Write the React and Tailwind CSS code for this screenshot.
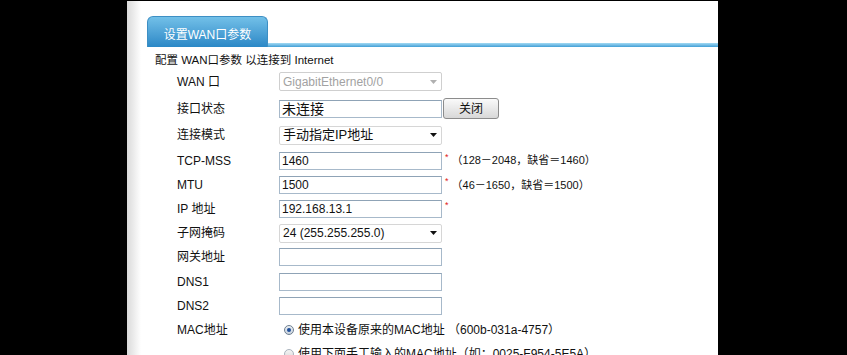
import React from "react";

function Arrow({ color }) {
  return (
    <svg width="7" height="4" viewBox="0 0 7 4" className="shrink-0">
      <polygon points="0,0 7,0 3.5,4" fill={color} />
    </svg>
  );
}

function Box({ children, className = "" }) {
  return (
    <div
      className={
        "w-[163px] h-[18px] shrink-0 border border-[#a7b9ca] border-t-[#8fa3b6] bg-white pl-[2px] flex items-center text-[12px] leading-[16px] text-[#111] whitespace-nowrap overflow-hidden " +
        className
      }
    >
      {children}
    </div>
  );
}

function Star() {
  return <span className="ml-[3px] mb-[7px] text-[9px] leading-[9px] text-[#e02020]">*</span>;
}

function Radio({ checked }) {
  return (
    <div
      className={
        "w-[10px] h-[10px] rounded-full border flex items-center justify-center shrink-0 " +
        (checked
          ? "border-[#6f7f90] bg-linear-to-b from-[#e9eef3] to-[#c9d3dd]"
          : "border-[#a9b3bd] bg-linear-to-b from-[#f4f4f4] to-[#dcdcdc]")
      }
    >
      {checked && <div className="w-[4px] h-[4px] rounded-full bg-[#1f4f9a]" />}
    </div>
  );
}

export default function App() {
  return (
    <div className="w-[847px] h-[355px] bg-black flex overflow-hidden font-['Liberation_Sans','Noto_Sans_CJK_SC',sans-serif] text-[12px] text-[#111]">
      <div className="w-[127px] shrink-0" />
      <div className="w-[591px] shrink-0 mt-[1px] bg-white flex overflow-hidden">
        <div className="w-[14px] shrink-0 bg-linear-to-r from-[#dadada] to-white" />
        <div className="flex-1 pt-[15px]">
          {/* tab bar */}
          <div className="flex items-end h-[31px]">
            <div className="ml-[6px] w-[121px] h-full rounded-t-[6px] bg-linear-to-b from-[#72c0e8] to-[#2a88c6] border border-b-0 border-[#3d8fc4] text-white text-[12px] leading-[16px] flex justify-center pt-[10px]">
              设置WAN口参数
            </div>
            <div className="flex-1 h-[4px] bg-linear-to-b from-[#a2daf3] to-[#3f9fd6]" />
          </div>

          {/* header */}
          <div className="mt-[5px] pl-[14px] text-[11.5px] leading-[16px] whitespace-nowrap">
            配置 WAN口参数 以连接到 Internet
          </div>

          <div className="pl-[36px]">
            {/* WAN */}
            <div className="h-[27px] flex items-center">
              <div className="w-[102px]">WAN 口</div>
              <div className="w-[163px] h-[19px] border border-[#cfcfcf] rounded-[2px] bg-white flex items-center justify-between pl-[3px] pr-[4px] text-[#a2a2a2]">
                <span>GigabitEthernet0/0</span>
                <Arrow color="#b0b0b0" />
              </div>
            </div>
            {/* 接口状态 */}
            <div className="h-[27px] flex items-center">
              <div className="w-[102px]">接口状态</div>
              <Box className="text-[14px] pl-[1px]">未连接</Box>
              <div className="ml-[1px] w-[56px] h-[21px] border border-[#8c8c8c] rounded-[3px] bg-linear-to-b from-[#fafafa] to-[#d8d8d8] flex items-center justify-center text-[12px]">
                关闭
              </div>
            </div>
            {/* 连接模式 */}
            <div className="h-[26px] flex items-center">
              <div className="w-[102px]">连接模式</div>
              <div className="w-[163px] h-[19px] border border-[#d6d6d6] rounded-[2px] bg-white flex items-center justify-between pl-[3px] pr-[4px]">
                <span className="text-[13px]">手动指定IP地址</span>
                <Arrow color="#111" />
              </div>
            </div>
            {/* TCP-MSS */}
            <div className="h-[25px] flex items-center whitespace-nowrap">
              <div className="w-[102px]">TCP-MSS</div>
              <Box>1460</Box>
              <Star />
              <span className="ml-[3px] text-[11px]">（128－2048，缺省＝1460）</span>
            </div>
            {/* MTU */}
            <div className="h-[24px] flex items-center whitespace-nowrap">
              <div className="w-[102px]">MTU</div>
              <Box>1500</Box>
              <Star />
              <span className="ml-[3px] text-[11px]">（46－1650，缺省＝1500）</span>
            </div>
            {/* IP */}
            <div className="h-[24px] flex items-center">
              <div className="w-[102px]">IP 地址</div>
              <Box>192.168.13.1</Box>
              <Star />
            </div>
            {/* 子网掩码 */}
            <div className="h-[24px] flex items-center">
              <div className="w-[102px]">子网掩码</div>
              <div className="w-[163px] h-[19px] border border-[#d6d6d6] rounded-[2px] bg-white flex items-center justify-between pl-[3px] pr-[4px]">
                <span>24 (255.255.255.0)</span>
                <Arrow color="#111" />
              </div>
            </div>
            {/* 网关 */}
            <div className="h-[24px] flex items-center">
              <div className="w-[102px]">网关地址</div>
              <Box />
            </div>
            {/* DNS1 */}
            <div className="h-[25px] flex items-center">
              <div className="w-[102px]">DNS1</div>
              <Box />
            </div>
            {/* DNS2 */}
            <div className="h-[24px] flex items-center">
              <div className="w-[102px]">DNS2</div>
              <Box />
            </div>
            {/* MAC */}
            <div className="h-[24px] flex items-center whitespace-nowrap">
              <div className="w-[102px]">MAC地址</div>
              <div className="ml-[5px] flex items-center">
                <Radio checked />
                <span className="ml-[4px]">使用本设备原来的MAC地址 （600b-031a-4757）</span>
              </div>
            </div>
            <div className="h-[24px] flex items-center whitespace-nowrap">
              <div className="w-[102px]" />
              <div className="ml-[5px] flex items-center">
                <Radio />
                <span className="ml-[4px]">使用下面手工输入的MAC地址（如：0025-F954-5E5A）</span>
              </div>
            </div>
          </div>
        </div>
      </div>
      <div className="flex-1" />
    </div>
  );
}
